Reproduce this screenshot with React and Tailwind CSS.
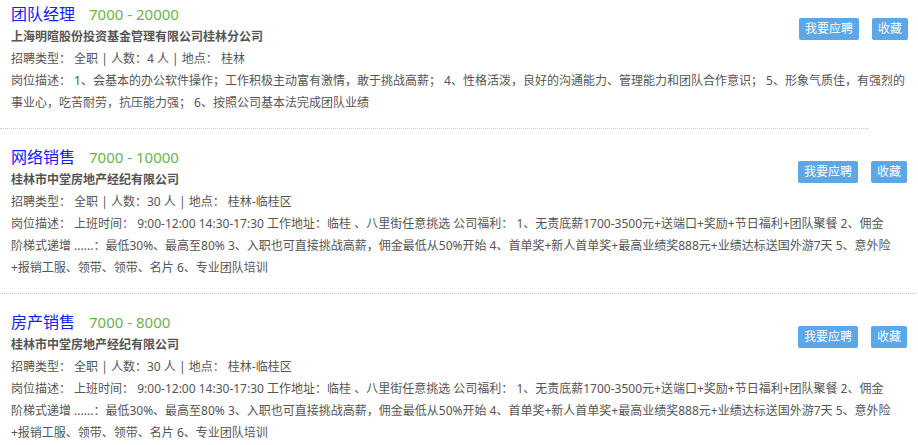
import React from 'react';

const desc2 = [
  '岗位描述： 上班时间： 9:00-12:00 14:30-17:30 工作地址：临桂 、八里街任意挑选 公司福利： 1、无责底薪1700-3500元+送端口+奖励+节日福利+团队聚餐 2、佣金',
  '阶梯式递增 ......：最低30%、最高至80% 3、入职也可直接挑战高薪，佣金最低从50%开始 4、首单奖+新人首单奖+最高业绩奖888元+业绩达标送国外游7天 5、意外险',
  '+报销工服、领带、领带、名片 6、专业团队培训',
];

const jobs = [
  {
    id: 1,
    title: '团队经理',
    salary: '7000 - 20000',
    company: '上海明暄股份投资基金管理有限公司桂林分公司',
    count: '4',
    place: '桂林',
    desc: [
      '岗位描述： 1、会基本的办公软件操作；工作积极主动富有激情，敢于挑战高薪； 4、性格活泼，良好的沟通能力、管理能力和团队合作意识； 5、形象气质佳，有强烈的',
      '事业心，吃苦耐劳，抗压能力强； 6、按照公司基本法完成团队业绩',
    ],
  },
  {
    id: 2,
    title: '网络销售',
    salary: '7000 - 10000',
    company: '桂林市中堂房地产经纪有限公司',
    count: '30',
    place: '桂林-临桂区',
    desc: desc2,
  },
  {
    id: 3,
    title: '房产销售',
    salary: '7000 - 8000',
    company: '桂林市中堂房地产经纪有限公司',
    count: '30',
    place: '桂林-临桂区',
    desc: desc2,
  },
];

const JobItem = ({ job, first }) => (
  <div
    className={`pl-[11px] pr-[10px] pb-[14px] border-b border-dotted border-[#c8c8c8] ${
      first ? 'pt-[2px] mr-[50px]' : 'pt-[16px] mr-[1px]'
    }`}
  >
    <div className={`flex items-start justify-between ${first ? 'mr-[-50px]' : ''}`}>
      <div>
        <div className="flex items-baseline h-[24px] leading-[24px]">
          <a href="#" className="text-[16px] text-[#1020ff]">{job.title}</a>
          <span className="ml-[14px] text-[15px] text-[#68b44c]">{job.salary}</span>
        </div>
        <div className="text-[12px] leading-[22px] font-bold text-[#555]">{job.company}</div>
        <div className="text-[12px] leading-[22px] text-[#555]">
          招聘类型： 全职 | 人数：{job.count} 人 | 地点： {job.place}
        </div>
      </div>
      <div className="flex gap-[13px] mt-[16px]">
        <button className="h-[22px] px-[6px] rounded-[2px] bg-[#5ca7e5] text-white text-[12px] leading-[22px]">
          我要应聘
        </button>
        <button className="h-[22px] px-[6px] rounded-[2px] bg-[#5ca7e5] text-white text-[12px] leading-[22px]">
          收藏
        </button>
      </div>
    </div>
    <p className={`text-[12px] leading-[22px] text-[#555] ${first ? 'mr-[-50px]' : ''}`}>
      {job.desc.map((line, i) => (
        <React.Fragment key={i}>
          {i > 0 && <br />}
          {line}
        </React.Fragment>
      ))}
    </p>
  </div>
);

export default function App() {
  return (
    <div className="bg-white w-[918px] font-['Noto_Sans','Noto_Sans_CJK_SC',sans-serif]">
      {jobs.map((job, i) => (
        <JobItem key={job.id} job={job} first={i === 0} />
      ))}
    </div>
  );
}
